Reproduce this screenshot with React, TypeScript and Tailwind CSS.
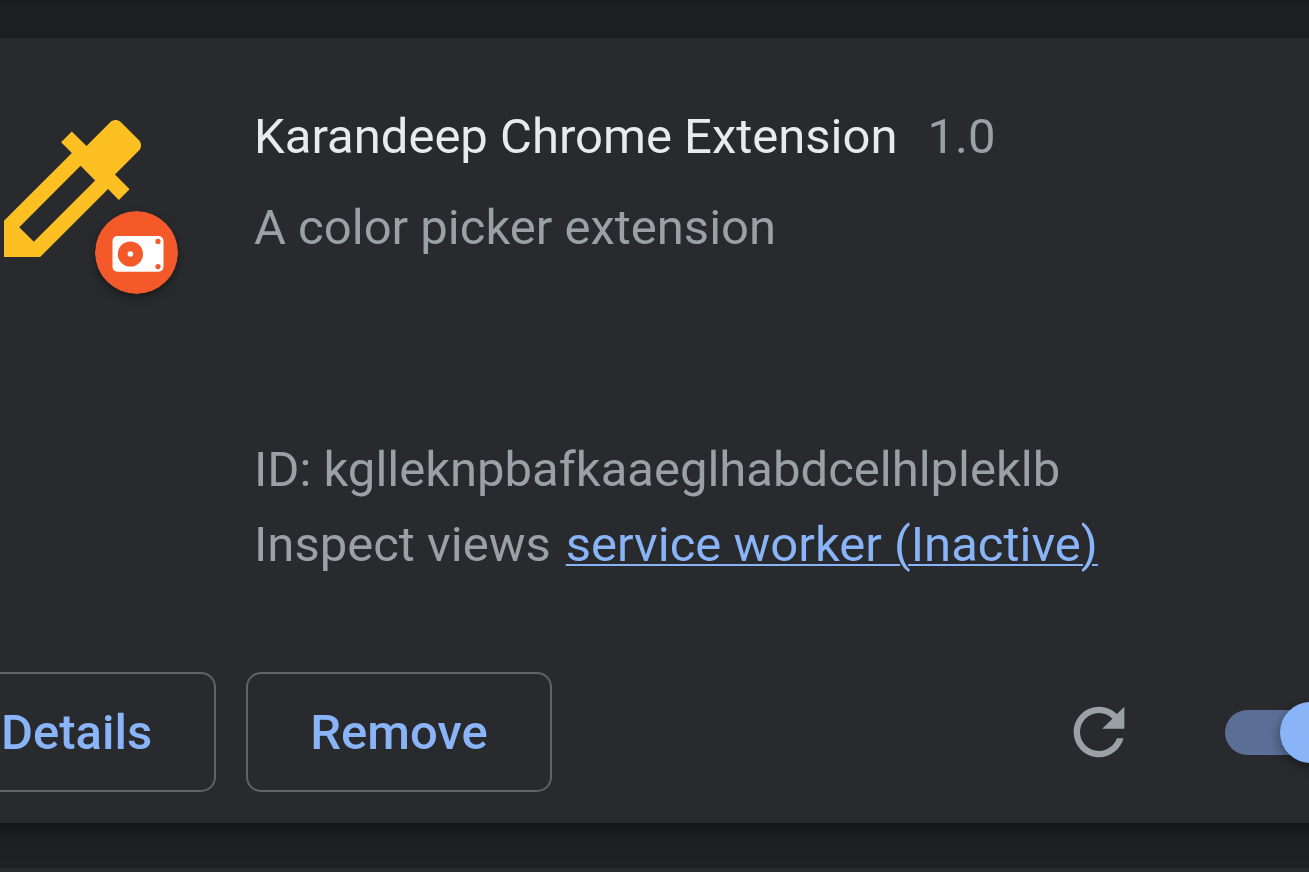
import React from "react";

function PickerIcon() {
  return (
    <svg viewBox="3 3 18 18" className="size-[137px] text-[#fcc022]" fill="currentColor" aria-hidden="true">
      <path d="M20.71 5.63l-2.34-2.34c-.39-.39-1.02-.39-1.41 0l-3.12 3.12-1.93-1.91-1.41 1.41 1.42 1.42L3 16.25V21h4.75l8.92-8.92 1.42 1.42 1.41-1.41-1.92-1.92 3.12-3.12c.4-.4.4-1.03.01-1.42zM6.92 19L5 17.08l8.06-8.06 1.92 1.92L6.92 19z" />
    </svg>
  );
}

function UnpackedBadge() {
  return (
    <svg
      viewBox="0 0 83 83"
      className="absolute top-[91px] left-[91px] size-[83px] rounded-full shadow-[0_4px_8px_rgba(0,0,0,0.35)]"
      aria-hidden="true"
    >
      <circle cx="41.5" cy="41.5" r="41.5" fill="#f4592a" />
      <rect x="17.5" y="25" width="51" height="35.8" rx="5" fill="#fff" />
      <circle cx="35.4" cy="43" r="12.6" fill="#f4592a" />
      <circle cx="35.4" cy="43" r="2.8" fill="#fff" />
      <circle cx="63" cy="30.4" r="2.6" fill="#f4592a" />
      <circle cx="63" cy="55.6" r="2.6" fill="#f4592a" />
    </svg>
  );
}

function ReloadIcon() {
  return (
    <svg viewBox="0 0 24 24" className="size-[76px]" fill="currentColor" aria-hidden="true">
      <path d="M17.65 6.35C16.2 4.9 14.21 4 12 4c-4.42 0-7.99 3.58-7.99 8s3.57 8 7.99 8c3.73 0 6.84-2.55 7.73-6h-2.08c-.82 2.33-3.04 4-5.65 4-3.31 0-6-2.69-6-6s2.69-6 6-6c1.66 0 3.14.69 4.22 1.78L13 11h7V4l-2.35 2.35z" />
    </svg>
  );
}

function ActionButton({ children }: { children: React.ReactNode }) {
  return (
    <button
      type="button"
      className="h-[120px] shrink-0 rounded-[15px] border-2 border-[#5f6368] px-[62px] pt-px font-medium text-[#8ab4f8]"
    >
      {children}
    </button>
  );
}

export default function App() {
  return (
    <main className="flex min-h-screen flex-col overflow-hidden bg-[#202124] font-['Roboto',sans-serif] text-[49px] leading-[75px] text-[#9aa0a6]">
      <div className="-mx-[63px] flex flex-1 flex-col gap-[45px]">
        <div className="-mt-[15px] h-2 bg-[#292a2d] shadow-[0_4px_8px_rgba(0,0,0,0.3),0_8px_23px_8px_rgba(0,0,0,0.15)]" />

        <article className="bg-[#292a2d] pt-[60px] pb-[31px] shadow-[0_4px_8px_rgba(0,0,0,0.3),0_8px_23px_8px_rgba(0,0,0,0.15)]">
          <div className="flex gap-[79px] pl-[67px]">
            <div className="relative mt-[22px] h-[174px] w-[171px] shrink-0">
              <PickerIcon />
              <UnpackedBadge />
            </div>
            <div className="min-w-0 flex-1 pt-px">
              <header className="flex gap-[30px]">
                <h1 className="text-[#e8eaed]">Karandeep Chrome Extension</h1>
                <span>1.0</span>
              </header>
              <p className="mt-4">A color picker extension</p>
              <p className="mt-[167px]">ID: kglleknpbafkaaeglhabdcelhlpleklb</p>
              <p className="flex gap-[15px]">
                <span>Inspect views</span>
                <a href="#service-worker" className="text-[#8ab4f8] underline decoration-2 underline-offset-3">
                  service worker (Inactive)
                </a>
              </p>
            </div>
          </div>

          <footer className="mt-[90px] flex items-center gap-[30px] pr-[41px]">
            <ActionButton>Details</ActionButton>
            <ActionButton>Remove</ActionButton>
            <button type="button" aria-label="Reload" className="ml-auto">
              <ReloadIcon />
            </button>
            <input
              type="checkbox"
              role="switch"
              defaultChecked
              aria-label="Enabled"
              className="relative ml-[58px] h-[45px] w-[106px] shrink-0 appearance-none rounded-full bg-[#5b6e96] before:absolute before:-top-2 before:left-[55px] before:size-[61px] before:rounded-full before:bg-[#8ab4f8] before:shadow-[0_4px_11px_rgba(0,0,0,0.4)]"
            />
          </footer>
        </article>

        <div className="min-h-1 flex-1 bg-[#292a2d]" />
      </div>
    </main>
  );
}
